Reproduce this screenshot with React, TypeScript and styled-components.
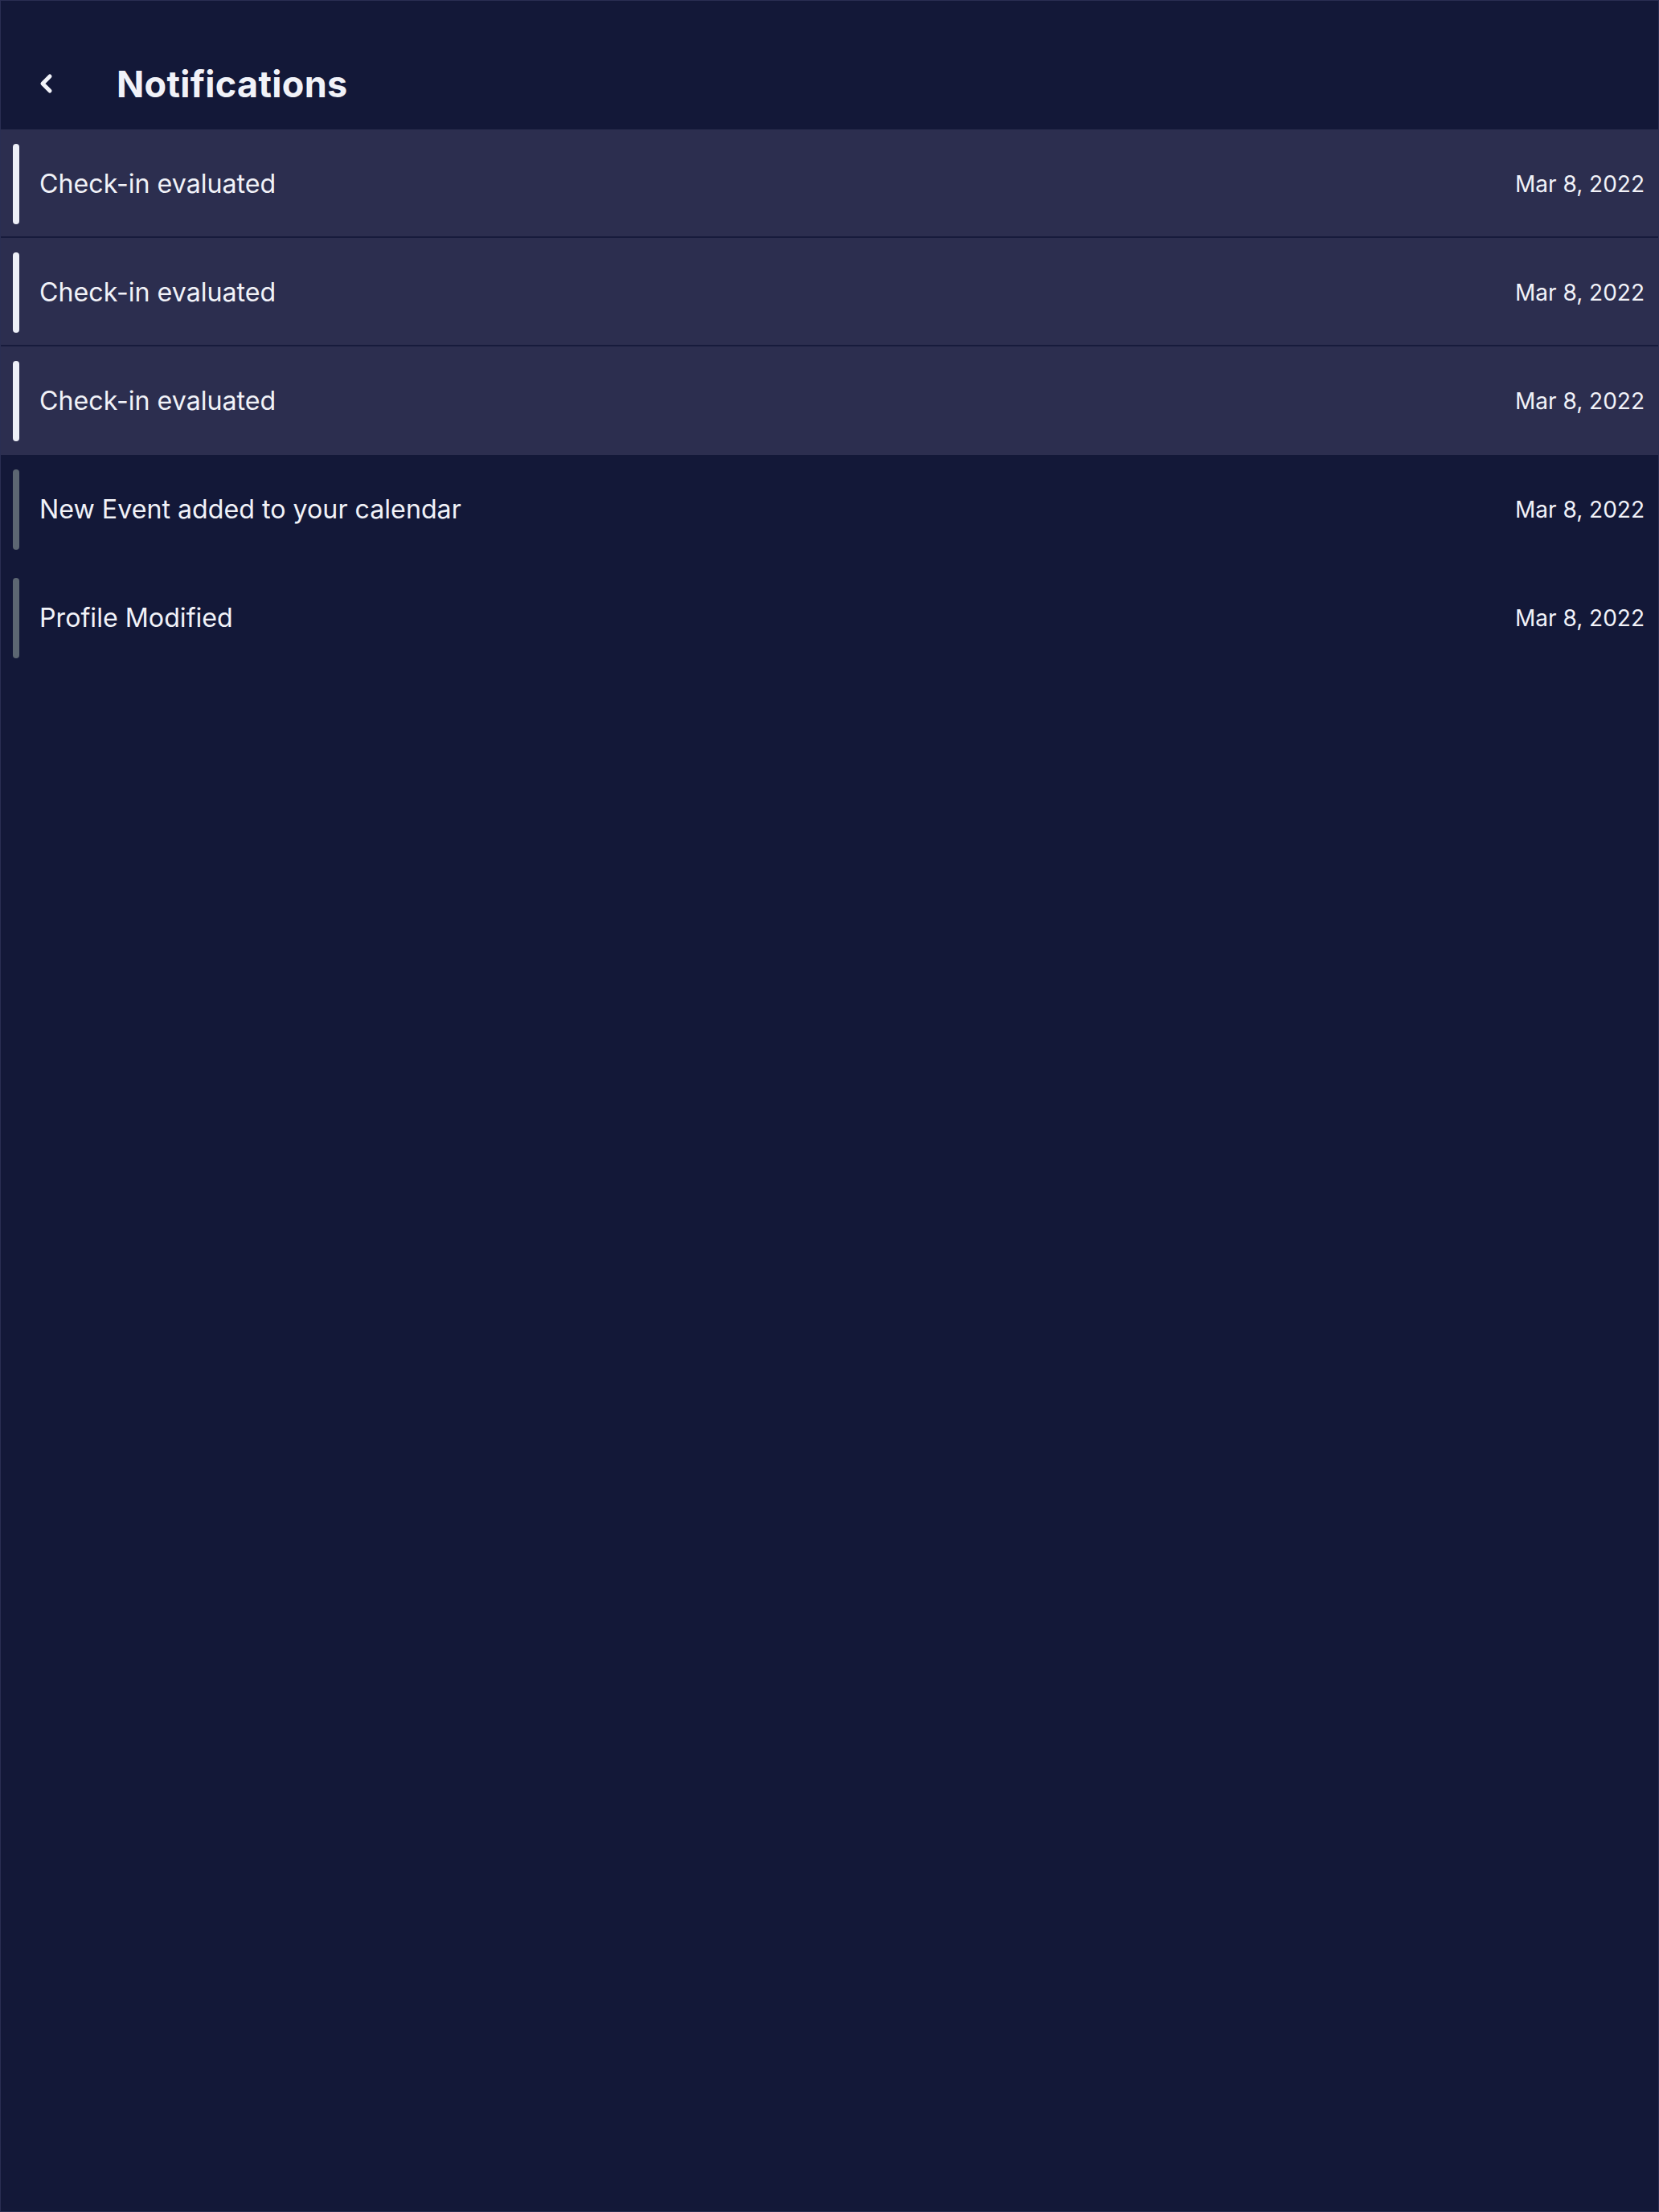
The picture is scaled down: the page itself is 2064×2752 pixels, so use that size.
import styled, { createGlobalStyle } from "styled-components";

const GlobalStyle = createGlobalStyle`
  html, body {
    margin: 0;
    padding: 0;
    background: #131838;
  }
  * {
    box-sizing: border-box;
  }
`;

const Screen = styled.div`
  width: 2064px;
  min-height: 2752px;
  background: #131838;
  border: 1px solid #2a2e52;
  font-family: Inter, "Noto Sans", sans-serif;
  color: #f1f2f8;
  display: flex;
  flex-direction: column;
`;

const Header = styled.header`
  height: 160px;
  padding-top: 46px;
  display: flex;
  align-items: center;
`;

const BackButton = styled.button`
  width: 44px;
  height: 44px;
  margin-left: 34px;
  padding: 0;
  border: none;
  background: transparent;
  color: #f1f2f8;
  display: flex;
  align-items: center;
  justify-content: center;
  cursor: pointer;
`;

const Title = styled.h1`
  margin: 0 0 0 66px;
  font-family: Inter, "Noto Sans", sans-serif;
  font-weight: 700;
  font-size: 45px;
  letter-spacing: 0.3px;
  color: #f1f2f8;
`;

const List = styled.ul`
  list-style: none;
  margin: 0;
  padding: 0;
  display: flex;
  flex-direction: column;
`;

const Row = styled.li<{ $unread: boolean }>`
  height: 135px;
  padding: 2px 17px 0 15px;
  display: flex;
  align-items: center;
  gap: 25px;
  background: ${(p) => (p.$unread ? "#2c2e4f" : "transparent")};
  border-bottom: 2px solid ${(p) => (p.$unread ? "#171b3c" : "transparent")};

  &:nth-child(3) {
    border-bottom-color: transparent;
  }
`;

const Marker = styled.span<{ $unread: boolean }>`
  width: 8px;
  height: 100px;
  border-radius: 4px;
  flex-shrink: 0;
  background: ${(p) => (p.$unread ? "#eef0f8" : "#5c6672")};
`;

const Label = styled.span`
  flex: 1;
  font-size: 32.2px;
  font-weight: 400;
  white-space: nowrap;
`;

const Date = styled.span`
  font-size: 28px;
  font-weight: 400;
  white-space: nowrap;
`;

function ChevronLeft() {
  return (
    <svg width="24" height="28" viewBox="0 0 24 28" fill="none">
      <polyline
        points="17,5 8,14 17,23"
        stroke="currentColor"
        strokeWidth="5"
        strokeLinecap="round"
        strokeLinejoin="round"
      />
    </svg>
  );
}

const notifications = [
  { id: 1, text: "Check-in evaluated", date: "Mar 8, 2022", unread: true },
  { id: 2, text: "Check-in evaluated", date: "Mar 8, 2022", unread: true },
  { id: 3, text: "Check-in evaluated", date: "Mar 8, 2022", unread: true },
  { id: 4, text: "New Event added to your calendar", date: "Mar 8, 2022", unread: false },
  { id: 5, text: "Profile Modified", date: "Mar 8, 2022", unread: false },
];

export default function App() {
  return (
    <>
      <GlobalStyle />
      <Screen>
        <Header>
          <BackButton aria-label="Back">
            <ChevronLeft />
          </BackButton>
          <Title>Notifications</Title>
        </Header>
        <List>
          {notifications.map((n) => (
            <Row key={n.id} $unread={n.unread}>
              <Marker $unread={n.unread} />
              <Label>{n.text}</Label>
              <Date>{n.date}</Date>
            </Row>
          ))}
        </List>
      </Screen>
    </>
  );
}
